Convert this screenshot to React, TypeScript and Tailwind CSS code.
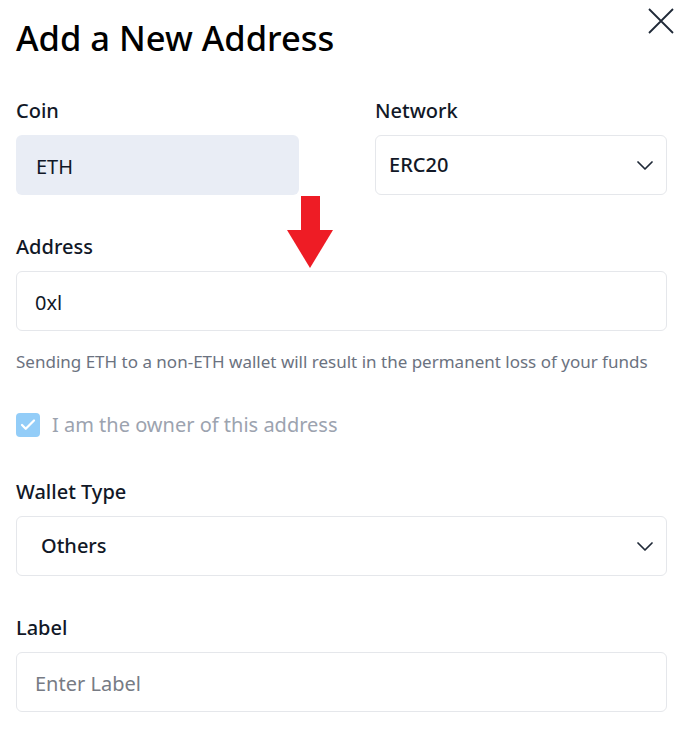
import { Check } from "lucide-react";

const FONT = { fontFamily: '"Noto Sans", "Open Sans", sans-serif' };

function FieldLabel({ children }: { children: React.ReactNode }) {
    return <div className="mb-3 text-[20px] leading-6 font-medium text-[#111827]">{children}</div>;
}

function Chevron() {
    return (
        <svg width="16" height="9" viewBox="0 0 16 9" fill="none" className="text-[#1f2937]">
            <path d="M1 1l7 7 7-7" stroke="currentColor" strokeWidth="1.7" strokeLinecap="round" strokeLinejoin="round" />
        </svg>
    );
}

function SelectBox({ value, padLeft }: { value: string; padLeft: string }) {
    return (
        <div className={`flex h-[60px] items-center justify-between rounded-md border border-[#e5e7eb] bg-white pr-[13px] ${padLeft}`}>
            <span className="text-[20px] font-medium text-[#111827]">{value}</span>
            <Chevron />
        </div>
    );
}

export default function App() {
    return (
        <div className="relative min-h-[741px] w-[694px] bg-white pl-4 pr-[27px]" style={FONT}>
            <div className="flex items-start justify-between">
                <h1 className="mt-[18px] text-[34.5px] leading-10 font-medium text-black">Add a New Address</h1>
                <button className="mt-2 -mr-[7px] text-[#1f2937]">
                    <svg width="26" height="26" viewBox="0 0 26 26">
                        <path d="M1 1L25 25M25 1L1 25" stroke="currentColor" strokeWidth="1.8" />
                    </svg>
                </button>
            </div>

            <div className="mt-[41px] flex gap-[76px]">
                <div className="w-[283px]">
                    <FieldLabel>Coin</FieldLabel>
                    <div className="flex h-[60px] items-center rounded-md bg-[#e9edf5] pl-5 pt-[3px] text-[20px] text-[#111827]">ETH</div>
                </div>
                <div className="flex-1">
                    <FieldLabel>Network</FieldLabel>
                    <SelectBox value="ERC20" padLeft="pl-[13px]" />
                </div>
            </div>

            <div className="mt-[40px]">
                <FieldLabel>Address</FieldLabel>
                <div className="flex h-[60px] items-center rounded-md border border-[#e5e7eb] pl-[18px] pt-[3px] text-[20px] text-[#111827]">
                    0xl
                </div>
            </div>

            <p className="mt-[21px] text-[17px] leading-5 text-[#6b7280]">
                Sending ETH to a non-ETH wallet will result in the permanent loss of your funds
            </p>

            <label className="mt-[41px] flex items-center gap-3">
                <span className="flex h-6 w-6 items-center justify-center rounded bg-[#93cdf8]">
                    <Check size={18} strokeWidth={3} className="text-white" />
                </span>
                <span className="text-[20px] leading-6 text-[#9ca3af]">I am the owner of this address</span>
            </label>

            <div className="mt-[43px]">
                <FieldLabel>Wallet Type</FieldLabel>
                <SelectBox value="Others" padLeft="pl-6" />
            </div>

            <div className="mt-[40px]">
                <FieldLabel>Label</FieldLabel>
                <input
                    placeholder="Enter Label"
                    className="h-[60px] w-full rounded-md border border-[#e5e7eb] pl-[18px] pt-[3px] text-[20px] text-[#111827] outline-none placeholder:text-[#777b84]"
                />
            </div>

            {/* annotation arrow over the form */}
            <svg className="absolute left-[287px] top-[196px]" width="46" height="73" viewBox="0 0 46 73">
                <rect x="14" y="0" width="19" height="35" fill="#ee1c25" />
                <polygon points="0,34 46,34 23,72" fill="#ee1c25" />
            </svg>
        </div>
    );
}
